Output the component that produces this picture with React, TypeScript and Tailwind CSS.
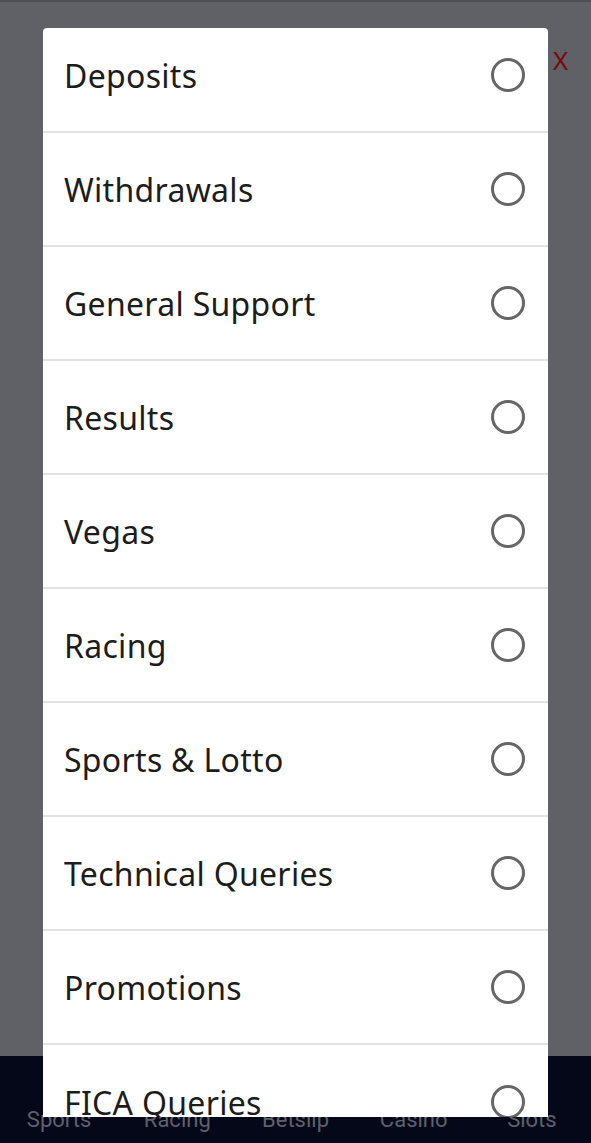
import React from 'react';

const options = [
  'Deposits',
  'Withdrawals',
  'General Support',
  'Results',
  'Vegas',
  'Racing',
  'Sports & Lotto',
  'Technical Queries',
  'Promotions',
  'FICA Queries',
];

const tabs = ['Sports', 'Racing', 'Betslip', 'Casino', 'Slots'];

const Radio = () => (
  <svg width="36" height="36" viewBox="0 0 36 36" className="shrink-0">
    <circle cx="18" cy="18" r="15.5" fill="none" stroke="#666" strokeWidth="3" />
  </svg>
);

export default function App() {
  return (
    <div className="relative w-full h-[1143px] flex flex-col bg-[#5f6166] border-t-2 border-[#4d4f53] font-['Noto_Sans',Roboto,sans-serif] overflow-hidden">
      <div className="flex-1" />

      {/* bottom nav, dimmed behind the overlay */}
      <nav className="h-[87px] bg-[#050818] flex items-end pb-[12px]">
        {tabs.map((t) => (
          <div key={t} className="flex-1 text-center text-[22px] leading-none text-[#5d616b] font-['Roboto',sans-serif]">
            {t}
          </div>
        ))}
      </nav>

      <span className="absolute left-[553px] top-[45px] text-[26px] leading-none text-[#7a0a0a] font-['Noto_Sans',sans-serif]">
        X
      </span>

      {/* select dialog */}
      <div className="absolute left-[43px] top-[26px] w-[505px] h-[1089px] bg-white rounded-t-[4px] overflow-hidden">
        <ul className="-mt-[9px]">
          {options.map((o, i) => (
            <li
              key={o}
              className={`h-[114px] flex items-center justify-between pl-[21px] pr-[22px] ${
                i < options.length - 1 ? 'border-b-2 border-[#e2e2e2]' : ''
              }`}
            >
              <span className="text-[32px] leading-none pt-[2px] text-[#1c1c1c] tracking-[0.3px]">{o}</span>
              <Radio />
            </li>
          ))}
        </ul>
      </div>
    </div>
  );
}
